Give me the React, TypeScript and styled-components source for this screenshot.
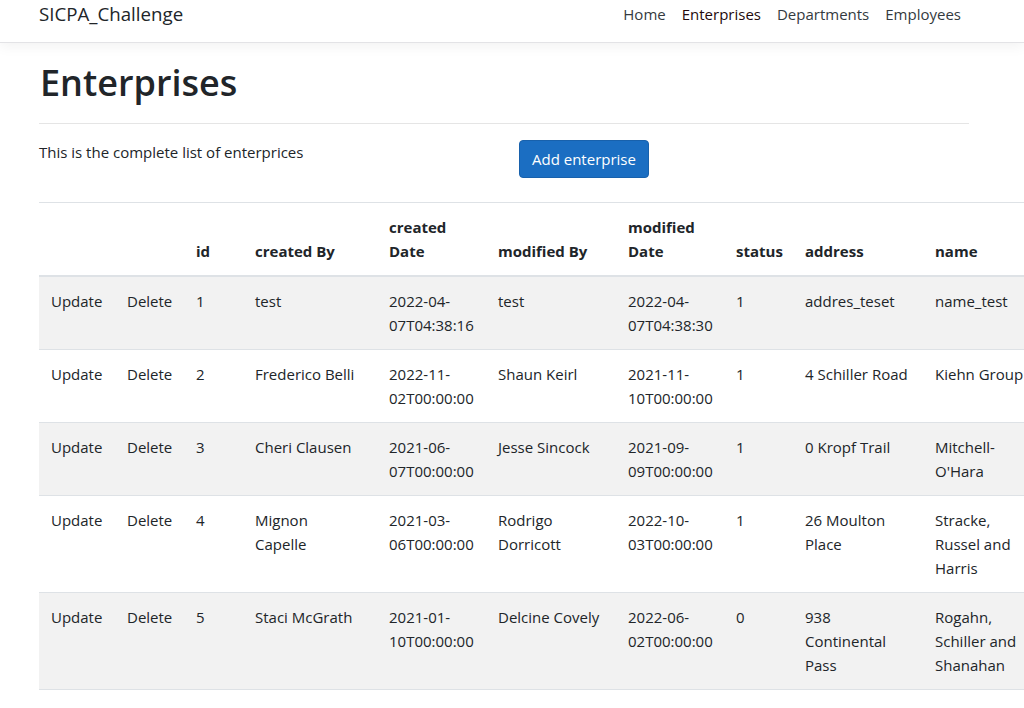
import React from "react";
import styled, { createGlobalStyle } from "styled-components";

const GlobalStyle = createGlobalStyle`
  html, body { margin: 0; padding: 0; overflow: hidden; background: #fff; }
  body {
    font-family: "Open Sans", "Noto Sans", sans-serif;
    font-size: 15px;
    line-height: 24px;
    color: #212529;
  }
  * { box-sizing: border-box; }
`;

const NavBar = styled.header`
  height: 43px;
  border-bottom: 1px solid #e3e3e6;
  box-shadow: 0 4px 12px rgba(0, 0, 0, 0.05);
  display: flex;
  align-items: flex-start;
  justify-content: space-between;
  padding: 2px 55px 0 39px;
  background: #fff;
`;

const Brand = styled.a`
  font-size: 18.7px;
  line-height: 24px;
  color: #212529;
  text-decoration: none;
`;

const NavList = styled.nav`
  display: flex;
`;

const NavLink = styled.a<{ $active?: boolean }>`
  font-size: 15px;
  line-height: 24px;
  padding: 0 8px;
  color: ${(p) => (p.$active ? "#240a0c" : "#343a40")};
  text-decoration: none;
`;

const Main = styled.main`
  padding: 16px 0 0 39px;
`;

const Title = styled.h1`
  margin: 0;
  font-size: 36px;
  line-height: 48px;
  font-weight: 600;
  color: #212529;
  padding-left: 1px;
`;

const Rule = styled.hr`
  margin: 16px 0;
  width: 930px;
  border: 0;
  border-top: 1px solid #e5e5e5;
`;

const IntroRow = styled.div`
  display: grid;
  grid-template-columns: 480px 1fr;
  align-items: start;
  margin-bottom: 24px;
`;

const Lead = styled.p`
  margin: 0;
`;

const PrimaryButton = styled.button`
  justify-self: start;
  font-family: inherit;
  font-size: 15px;
  line-height: 24px;
  color: #fff;
  background: #1b6ec2;
  border: 1px solid #1861ac;
  border-radius: 4px;
  padding: 6px 12px;
  cursor: pointer;
`;

const TableWrap = styled.div`
  overflow: hidden;
`;

const Table = styled.table`
  border-collapse: collapse;
  table-layout: fixed;
  width: 1054px;
`;

const HeadCell = styled.th`
  text-align: left;
  vertical-align: bottom;
  font-weight: 700;
  font-size: 15px;
  line-height: 24px;
  padding: 12px;
  border-top: 1px solid #dee2e6;
  border-bottom: 2px solid #dee2e6;
`;

const BodyRow = styled.tr<{ $striped: boolean }>`
  background: ${(p) => (p.$striped ? "#f2f2f2" : "transparent")};
`;

const Cell = styled.td`
  vertical-align: top;
  padding: 12px;
  border-top: 1px solid #dee2e6;
  border-bottom: 1px solid #dee2e6;
  font-size: 15px;
  line-height: 24px;
`;

const CellText = styled.div<{ $max: number }>`
  max-width: ${(p) => p.$max}px;
`;

const ActionLink = styled.a`
  color: #212529;
  text-decoration: none;
  cursor: pointer;
`;

const widths = [76, 69, 59, 134, 109, 130, 108, 69, 130, 170];

const headers = ["", "", "id", "created By", "created Date", "modified By", "modified Date", "status", "address", "name"];

type Enterprise = {
  id: number;
  createdBy: string;
  createdDate: string;
  modifiedBy: string;
  modifiedDate: string;
  status: number;
  address: string;
  name: string;
};

const rows: Enterprise[] = [
  { id: 1, createdBy: "test", createdDate: "2022-04-07T04:38:16", modifiedBy: "test", modifiedDate: "2022-04-07T04:38:30", status: 1, address: "addres_teset", name: "name_test" },
  { id: 2, createdBy: "Frederico Belli", createdDate: "2022-11-02T00:00:00", modifiedBy: "Shaun Keirl", modifiedDate: "2021-11-10T00:00:00", status: 1, address: "4 Schiller Road", name: "Kiehn Group" },
  { id: 3, createdBy: "Cheri Clausen", createdDate: "2021-06-07T00:00:00", modifiedBy: "Jesse Sincock", modifiedDate: "2021-09-09T00:00:00", status: 1, address: "0 Kropf Trail", name: "Mitchell-O'Hara" },
  { id: 4, createdBy: "Mignon Capelle", createdDate: "2021-03-06T00:00:00", modifiedBy: "Rodrigo Dorricott", modifiedDate: "2022-10-03T00:00:00", status: 1, address: "26 Moulton Place", name: "Stracke, Russel and Harris" },
  { id: 5, createdBy: "Staci McGrath", createdDate: "2021-01-10T00:00:00", modifiedBy: "Delcine Covely", modifiedDate: "2022-06-02T00:00:00", status: 0, address: "938 Continental Pass", name: "Rogahn, Schiller and Shanahan" },
];

export default function App() {
  return (
    <>
      <GlobalStyle />
      <NavBar>
        <Brand href="#">SICPA_Challenge</Brand>
        <NavList>
          <NavLink href="#">Home</NavLink>
          <NavLink href="#" $active>Enterprises</NavLink>
          <NavLink href="#">Departments</NavLink>
          <NavLink href="#">Employees</NavLink>
        </NavList>
      </NavBar>
      <Main>
        <Title>Enterprises</Title>
        <Rule />
        <IntroRow>
          <Lead>This is the complete list of enterprices</Lead>
          <PrimaryButton>Add enterprise</PrimaryButton>
        </IntroRow>
        <TableWrap>
          <Table>
            <colgroup>
              {widths.map((w, i) => (
                <col key={i} style={{ width: w }} />
              ))}
            </colgroup>
            <thead>
              <tr>
                {headers.map((h, i) => (
                  <HeadCell key={i}>{h}</HeadCell>
                ))}
              </tr>
            </thead>
            <tbody>
              {rows.map((r, i) => (
                <BodyRow key={r.id} $striped={i % 2 === 0}>
                  <Cell><ActionLink>Update</ActionLink></Cell>
                  <Cell><ActionLink>Delete</ActionLink></Cell>
                  <Cell>{r.id}</Cell>
                  <Cell><CellText $max={104}>{r.createdBy}</CellText></Cell>
                  <Cell>{r.createdDate}</Cell>
                  <Cell>{r.modifiedBy}</Cell>
                  <Cell>{r.modifiedDate}</Cell>
                  <Cell>{r.status}</Cell>
                  <Cell>{r.address}</Cell>
                  <Cell><CellText $max={96}>{r.name}</CellText></Cell>
                </BodyRow>
              ))}
            </tbody>
          </Table>
        </TableWrap>
      </Main>
    </>
  );
}
